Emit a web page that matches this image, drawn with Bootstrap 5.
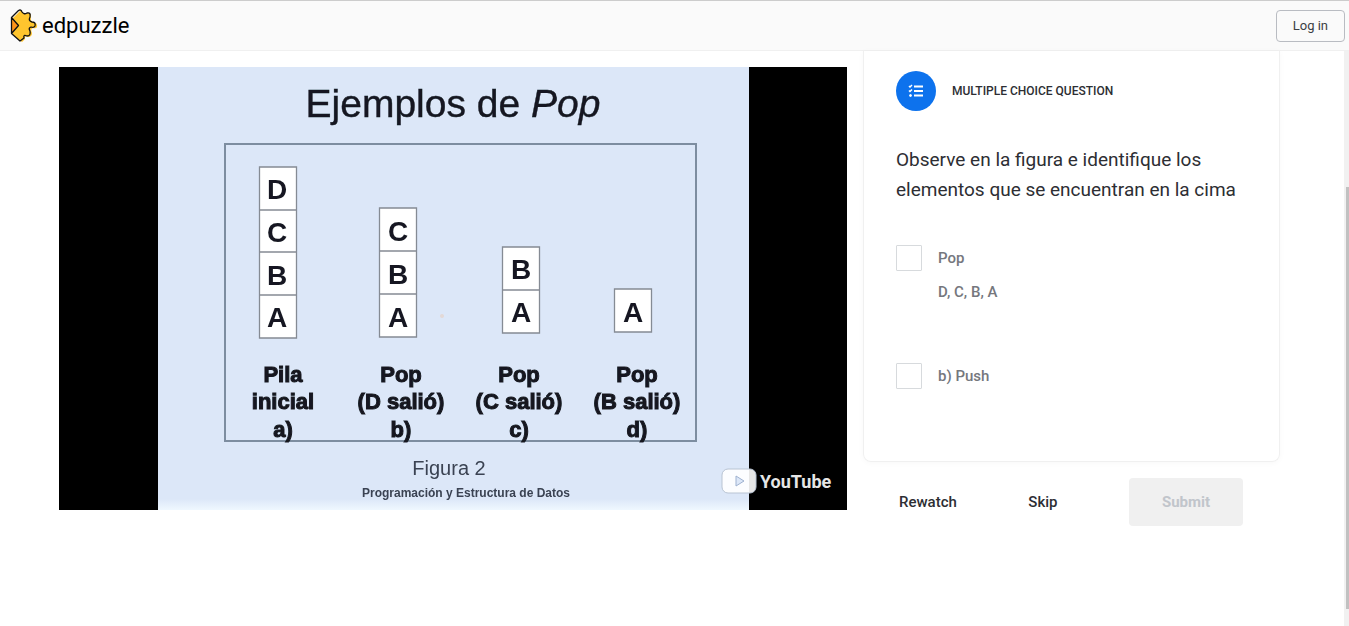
<!DOCTYPE html>
<html lang="es">
<head>
<meta charset="utf-8">
<meta name="viewport" content="width=device-width, initial-scale=1">
<title>Edpuzzle</title>
<link href="https://cdn.jsdelivr.net/npm/bootstrap@5.3.0/dist/css/bootstrap.min.css" rel="stylesheet">
<style>
  body { font-family: Roboto, sans-serif; color: #2d2e33; font-size: 15px; line-height: 24px; }
  .top-bar { background: #fafafa; border-top: 1px solid #ccc; border-bottom: 1px solid #f0f0f0; padding: 8px 4px 8px 10px; }
  .brand-name { font-size: 22px; line-height: 32px; color: #000; }
  .login-btn { border: 1px solid #b9bcc2; border-radius: 4px; padding: 5px 16px; font-size: 13px; line-height: 20px; color: #3c3f45; }
  .lesson { padding: 0 64px 0 59px; }
  .question-panel { width: 417px; }
  .question-card { border: 1px solid #f0f0f0; border-top: 0; border-radius: 0 0 8px 8px; padding: 20px 32px 72px; box-shadow: 0 1px 6px rgba(0,0,0,.03); }
  .kind-icon { width: 40px; height: 40px; background: #0d72ed; }
  .kind-label { font-size: 12px; line-height: 20px; font-weight: 500; }
  .prompt { font-size: 19px; line-height: 30px; margin: 34px 0 40px; }
  .answers { gap: 58px; }
  .answer { color: #75777d; font-weight: 500; gap: 16px; }
  .answer .form-check-input { width: 26px; height: 26px; border: 1px solid #d7dadd; border-radius: 1px; }
  .answer p { line-height: 26px; margin-bottom: 8px; }
  .answer p:last-child { margin-bottom: 0; }
  .plain-btn { border: 0; padding: 12px 0; font-size: 15px; font-weight: 500; color: #2d2e33; }
  .submit-btn, .submit-btn:disabled { border: 0; border-radius: 4px; background: #f0f0f0; color: #c1c5cb; font-size: 15px; font-weight: 700; opacity: 1; width: 114px; height: 48px; }
  .panel-actions { padding: 16px 37px 16px 36px; }
  .scroll-track { width: 5px; background: #f1f1f1; padding: 136px 0 17px 2px; }
  .scroll-thumb { background: #c1c1c1; }
  .slide-text { font-family: "Liberation Sans", Arial, sans-serif; }
</style>
</head>
<body class="d-flex flex-column min-vh-100 bg-white">
<header class="top-bar d-flex justify-content-between align-items-center">
  <a href="#" class="d-flex align-items-center text-decoration-none gap-1">
    <svg width="28" height="33" viewBox="0 0 28 33" aria-hidden="true">
      <path d="M3 9 10 2Q12 1 13 4Q16 6 18 4Q21 4 21 8Q20 12 23 13Q28 14 27 18Q26 20 23 19Q20 20 22 24Q22 28 18 28Q14 26 15 30L12 33 3 26Z" fill="#ffc52e"/>
      <path d="M2 10 9 16 2 24Z" fill="#ff9418"/>
      <path d="M1.500 8.500 8.500 1.500Q11 0 12 3Q14 6 17 4Q21 3 20 8Q18 12 22 13Q26 13 25 17Q24 19 21 18Q18 19 20 22Q21 27 17 27Q13 25 14 29L10 32 1.500 24.500ZM1.500 8.500 8.500 16.500 1.500 24.500" fill="none" stroke="#111" stroke-width="1.300" stroke-linejoin="round"/>
    </svg>
    <span class="brand-name">edpuzzle</span>
  </a>
  <button type="button" class="btn login-btn">Log in</button>
</header>
<div class="d-flex flex-grow-1">
  <main class="lesson d-flex flex-grow-1 gap-3 align-items-start">
    <section class="flex-grow-1 pt-3">
      <svg class="slide-text d-block w-100" viewBox="0 0 788 443" role="img" aria-label="Ejemplos de Pop">
        <defs>
          <filter id="soft" x="-5%" y="-5%" width="110%" height="110%"><feGaussianBlur stdDeviation=".6"/></filter>
          <linearGradient id="sheet" x1="0" y1="0" x2="0" y2="1"><stop offset="0" stop-color="#dce7f8"/><stop offset=".975" stop-color="#dce7f8"/><stop offset="1" stop-color="#eff8ff"/></linearGradient>
        </defs>
        <rect width="788" height="443"/>
        <rect x="99" width="591" height="443" fill="url(#sheet)"/>
        <g filter="url(#soft)" text-anchor="middle" fill="#141820">
          <text x="394" y="50" font-size="39" stroke="#141820" stroke-width=".4">Ejemplos de <tspan font-style="italic">Pop</tspan></text>
          <rect x="166" y="77" width="471" height="297" fill="none" stroke="#7d8da0" stroke-width="2"/>
          <g fill="#fff" stroke="#858b94" stroke-width="1.300">
            <path d="M200.500 100h37v171h-37ZM320.500 141h37v129h-37ZM443.500 180h37v86h-37ZM555.500 222h37v43h-37Z"/>
            <path d="M200 143h38M200 185h38M200 228h38M320 184h38M320 227h38M443 223h38"/>
          </g>
          <g font-size="28" font-weight="700">
            <text x="218" y="132">D</text><text x="218" y="175">C</text><text x="218" y="218">B</text><text x="218" y="260">A</text>
            <text x="339" y="174">C</text><text x="339" y="217">B</text><text x="339" y="260">A</text>
            <text x="462" y="212">B</text><text x="462" y="255">A</text>
            <text x="574" y="255">A</text>
          </g>
          <g font-size="22" font-weight="700" stroke="#141820">
            <text x="224" y="315">Pila</text><text x="224" y="342">inicial</text><text x="224" y="370">a)</text>
            <text x="342" y="315">Pop</text><text x="342" y="342">(D salió)</text><text x="342" y="370">b)</text>
            <text x="460" y="315">Pop</text><text x="460" y="342">(C salió)</text><text x="460" y="370">c)</text>
            <text x="578" y="315">Pop</text><text x="578" y="342">(B salió)</text><text x="578" y="370">d)</text>
          </g>
          <text x="390" y="408" font-size="20" fill="#3a4352">Figura 2</text>
          <text x="407" y="430" font-size="12" font-weight="700" fill="#3a4352">Programación y Estructura de Datos</text>
          <circle cx="383" cy="249" r="2" fill="#e3d9d6"/>
        </g>
        <a href="#">
          <rect x="663" y="402" width="34" height="24" rx="6" fill="#fff" fill-opacity=".9" stroke="#b9c4d3"/>
          <path d="M677 409v10l8-5Z" fill="#dce7f8" stroke="#9fb2d0"/>
          <text x="701" y="421" font-family="Roboto, sans-serif" font-size="18" font-weight="700" fill="#e6e6e6">YouTube</text>
        </a>
      </svg>
    </section>
    <form class="question-panel flex-shrink-0">
      <div class="question-card">
        <div class="d-flex align-items-center gap-3">
          <span class="kind-icon rounded-circle d-flex align-items-center justify-content-center">
            <svg width="16" height="14" viewBox="0 0 16 14" fill="none" stroke="#fff" aria-hidden="true"><path d="M6 2.500h9M6 7h9M6 11.500h9" stroke-width="2"/><path d="m1 2 1 1 2-2M1 6.500l1 1 2-2" stroke-width="1.500"/><circle cx="2.500" cy="11.500" r="1" fill="#fff"/></svg>
          </span>
          <span class="kind-label">MULTIPLE CHOICE QUESTION</span>
        </div>
        <p class="prompt">Observe en la figura e identifique los elementos que se encuentran en la cima</p>
        <div class="answers d-flex flex-column">
          <div class="answer d-flex align-items-start">
            <input class="form-check-input m-0 flex-shrink-0" type="checkbox" id="pop">
            <label for="pop"><p>Pop</p><p>D, C, B, A</p></label>
          </div>
          <div class="answer d-flex align-items-start">
            <input class="form-check-input m-0 flex-shrink-0" type="checkbox" id="push">
            <label for="push"><p>b) Push</p></label>
          </div>
        </div>
      </div>
      <div class="panel-actions d-flex justify-content-between align-items-center">
        <button type="button" class="btn plain-btn">Rewatch</button>
        <button type="button" class="btn plain-btn">Skip</button>
        <button type="submit" class="btn submit-btn" disabled>Submit</button>
      </div>
    </form>
  </main>
  <div class="scroll-track d-flex flex-column"><div class="scroll-thumb flex-grow-1"></div></div>
</div>
<script src="https://cdn.jsdelivr.net/npm/bootstrap@5.3.0/dist/js/bootstrap.bundle.min.js"></script>
</body>
</html>
